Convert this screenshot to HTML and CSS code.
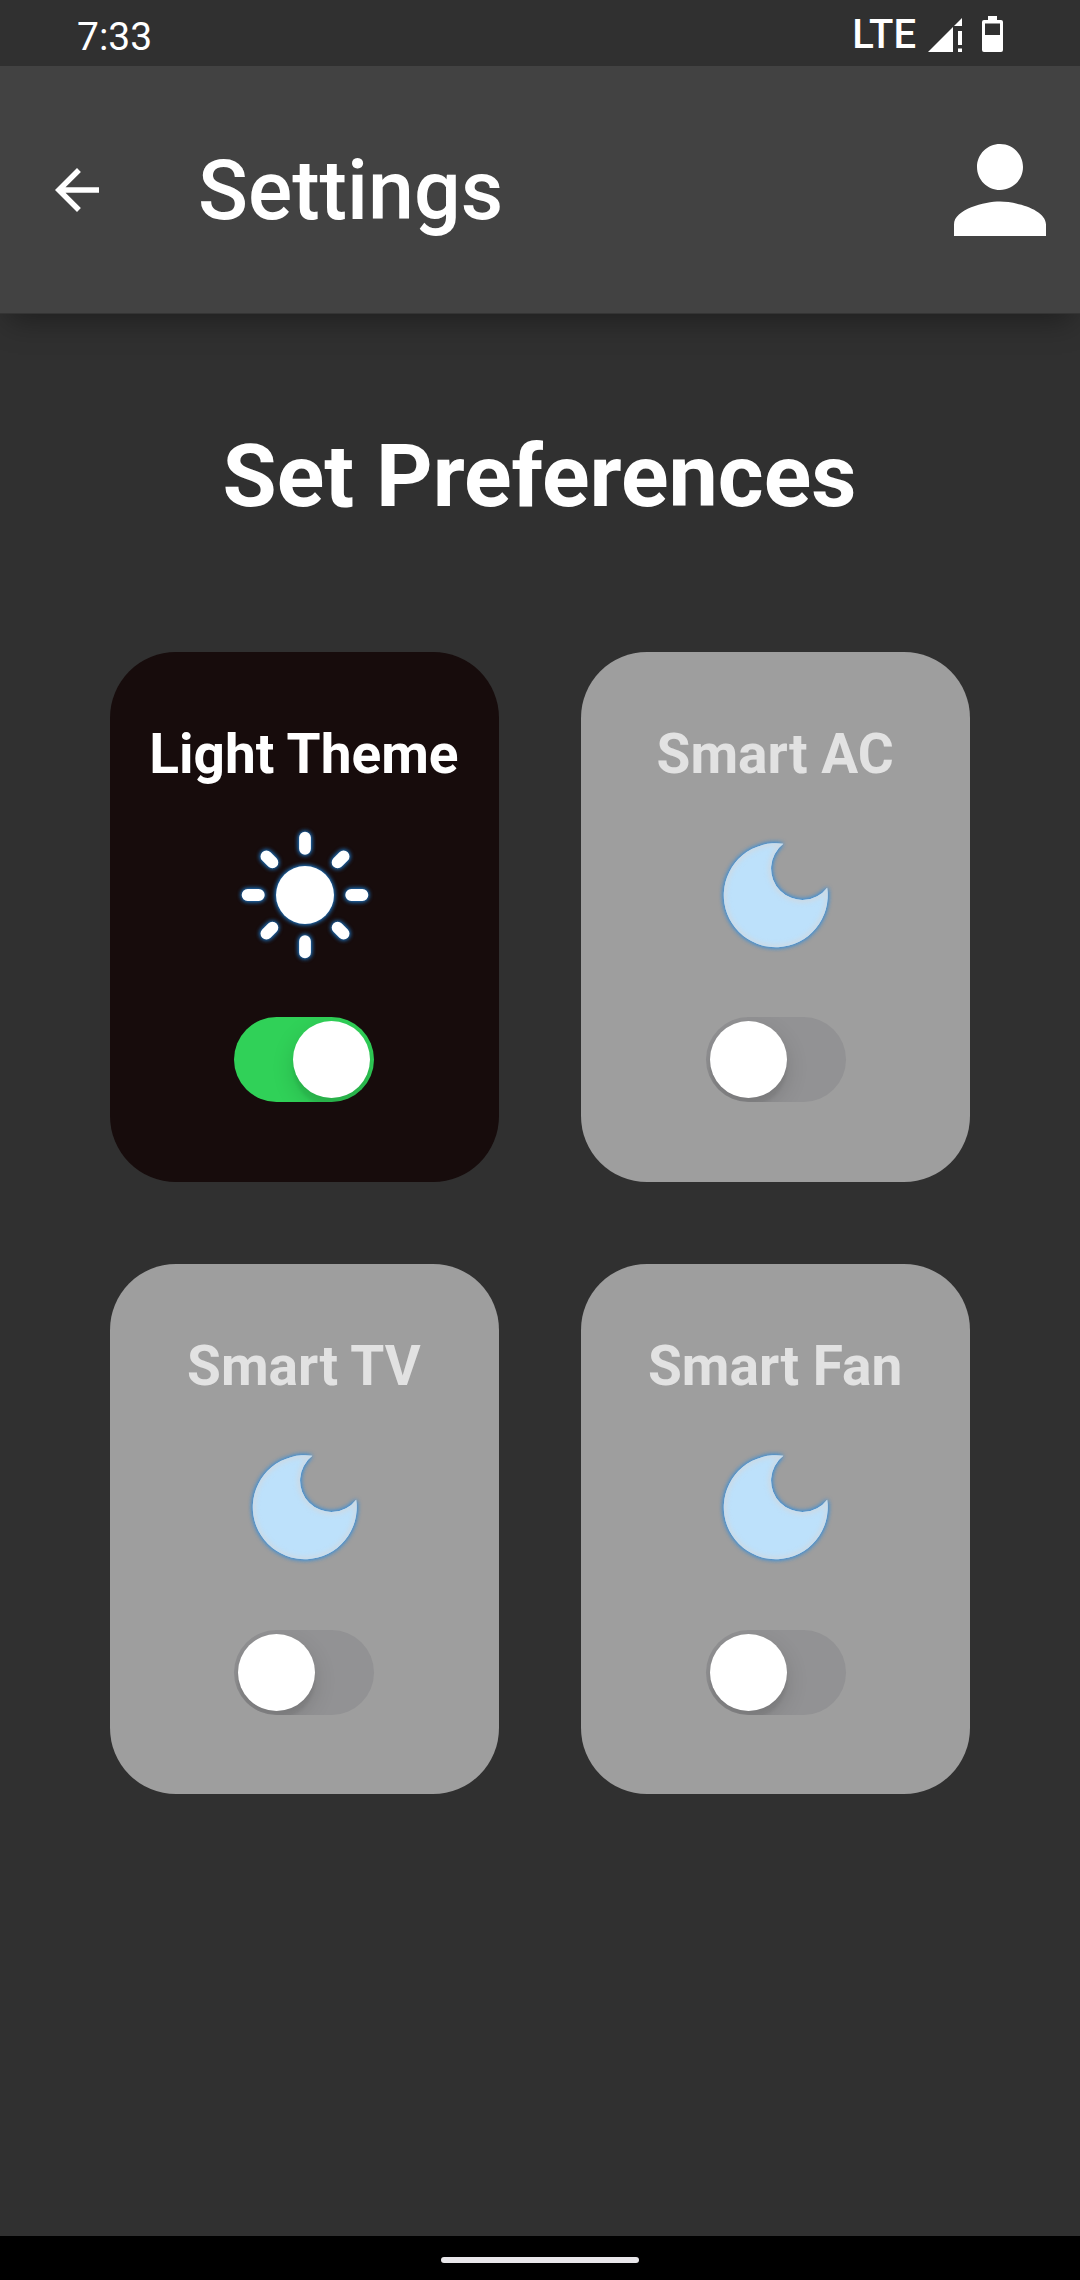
FILE: index.html
```html
<!DOCTYPE html>
<html lang="en">
<head>
<meta charset="utf-8">
<title>Settings</title>
<link rel="stylesheet" href="styles.css">
</head>
<body>
<svg width="0" height="0" class="defs" aria-hidden="true">
  <defs>
    <filter id="glow" x="-20%" y="-20%" width="140%" height="140%" color-interpolation-filters="sRGB">
      <feGaussianBlur in="SourceAlpha" stdDeviation="2.8" result="b"/>
      <feFlood flood-color="#1e88e5" flood-opacity=".8"/>
      <feComposite in2="b" operator="in" result="g"/>
      <feMerge><feMergeNode in="g"/><feMergeNode in="g"/><feMergeNode in="SourceGraphic"/></feMerge>
    </filter>
    <filter id="soft" x="-20%" y="-20%" width="140%" height="140%" color-interpolation-filters="sRGB">
      <feGaussianBlur stdDeviation="2"/>
    </filter>
    <clipPath id="moon-clip"><path d="M7.3 -51.2A52 52 0 1 0 51.2 -7.3A31.3 31.3 0 1 1 7.3 -51.2Z"/></clipPath>
    <symbol id="moon" viewBox="-70 -70 140 140">
      <path filter="url(#glow)" fill="#bde1fb" d="M7.3 -51.2A52 52 0 1 0 51.2 -7.3A31.3 31.3 0 1 1 7.3 -51.2Z"/>
      <g clip-path="url(#moon-clip)">
        <path filter="url(#soft)" fill="none" stroke="#cbdae6" stroke-width="6" d="M7.3 -51.2A52 52 0 1 0 51.2 -7.3A31.3 31.3 0 1 1 7.3 -51.2Z"/>
      </g>
    </symbol>
    <symbol id="sun" viewBox="-70 -70 140 140">
      <g filter="url(#glow)">
        <circle r="29" fill="#fff"/>
        <path stroke="#fff" stroke-width="11.8" stroke-linecap="round" d="M0 -57.4V-46.2M0 57.4V46.2M-57.4 0H-46.2M57.4 0H46.2M-38.6 -38.6L-32.6 -32.6M38.6 -38.6L32.6 -32.6M-38.6 38.6L-32.6 32.6M38.6 38.6L32.6 32.6"/>
      </g>
    </symbol>
  </defs>
</svg>
<div class="screen">
  <div class="statusbar">
    <span class="time">7:33</span>
    <div class="status-icons">
      <span class="network">LTE</span>
      <svg class="signal" viewBox="0 0 34 34"><path fill="#fff" d="M0 34L25 9V34ZM26 8L34 0V8ZM30 13H34V27H30ZM30 30.5H34V34H30Z"/></svg>
      <svg class="battery" viewBox="0 0 21 36"><path fill="#fff" fill-rule="evenodd" d="M6 0H15V4H19Q21 4 21 6V34Q21 36 19 36H2Q0 36 0 34V6Q0 4 2 4H6ZM3 7.5V19H18V7.5Z"/></svg>
    </div>
  </div>
  <header class="appbar">
    <svg class="back" viewBox="0 0 24 24"><path fill="#fff" d="M20 11H7.83l5.59-5.59L12 4l-8 8 8 8 1.41-1.41L7.83 13H20v-2z"/></svg>
    <h1 class="appbar-title">Settings</h1>
    <svg class="person" viewBox="0 0 24 24"><path fill="#fff" d="M12 12c2.21 0 4-1.79 4-4s-1.79-4-4-4-4 1.79-4 4 1.79 4 4 4zm0 2c-2.67 0-8 1.34-8 4v2h16v-2c0-2.66-5.33-4-8-4z"/></svg>
  </header>
  <main class="content">
    <h2 class="heading">Set Preferences</h2>
    <div class="grid">
      <section class="card card-on">
        <h3 class="card-title">Light Theme</h3>
        <svg class="card-icon"><use href="#sun"/></svg>
        <div class="switch switch-on"><div class="knob"></div></div>
      </section>
      <section class="card">
        <h3 class="card-title">Smart AC</h3>
        <svg class="card-icon"><use href="#moon"/></svg>
        <div class="switch"><div class="knob"></div></div>
      </section>
      <section class="card">
        <h3 class="card-title">Smart TV</h3>
        <svg class="card-icon"><use href="#moon"/></svg>
        <div class="switch"><div class="knob"></div></div>
      </section>
      <section class="card">
        <h3 class="card-title">Smart Fan</h3>
        <svg class="card-icon"><use href="#moon"/></svg>
        <div class="switch"><div class="knob"></div></div>
      </section>
    </div>
  </main>
  <footer class="navbar"><div class="handle"></div></footer>
</div>
</body>
</html>
```
FILE: styles.css
```css
* { box-sizing: border-box; margin: 0; padding: 0; }
body { background: #303030; color: #fff; font-family: Roboto, sans-serif; }
.defs { display: block; }
.screen { width: 1080px; height: 2280px; display: flex; flex-direction: column; overflow: hidden; }

.statusbar { height: 66px; flex: none; display: flex; justify-content: space-between; padding: 0 77px; background: #303030; z-index: 2; }
.time { font-size: 39px; line-height: 74px; }
.status-icons { display: flex; }
.network { font-size: 40px; line-height: 70px; font-weight: 500; margin-right: 12px; }
.signal { width: 34px; height: 34px; margin: 18px 20px 0 0; }
.battery { width: 21px; height: 36px; margin-top: 16px; }

.appbar { height: 247px; flex: none; display: flex; align-items: center; padding: 1px 11px 0 44px; background: #424242; box-shadow: 0 1px 0 #343434, 0 16px 28px -8px rgba(0, 0, 0, .36); z-index: 1; }
.back { width: 66px; height: 66px; }
.appbar-title { margin-left: 88px; padding-top: 1px; font-size: 82.5px; font-weight: 500; line-height: 97px; }
.person { width: 138px; height: 138px; margin-left: auto; }

.content { flex: 1; padding: 111px 110px 0; }
.heading { padding-right: 1px; font-size: 88px; font-weight: 700; line-height: 104px; text-align: center; }
.grid { display: grid; grid-template-columns: 1fr 1fr; grid-auto-rows: 530px; gap: 82.4px 82.5px; margin-top: 124px; }
.card { display: flex; flex-direction: column; align-items: center; padding-top: 68px; border-radius: 66px; background: #9e9e9e; }
.card-on { background: #170c0c; }
.card-title { padding-right: 1px; font-size: 55px; font-weight: 700; line-height: 68px; color: #e2e2e2; white-space: nowrap; }
.card-on .card-title { color: #fff; }
.card-icon { width: 140px; height: 140px; margin: 37px 0 0 .75px; }
.switch { display: flex; width: 140px; height: 85.25px; margin-top: 52.2px; padding: 4px; border-radius: 43px; background: #929294; overflow: hidden; }
.switch-on { justify-content: flex-end; background: #30d158; }
.knob { width: 77px; height: 77px; border-radius: 50%; background: #fff; box-shadow: 0 8px 22px rgba(0, 0, 0, .15), 0 8px 3px rgba(0, 0, 0, .06); }

.navbar { height: 44px; flex: none; display: flex; justify-content: center; padding-top: 21px; background: #000; }
.handle { width: 198px; height: 6px; border-radius: 3px; background: #e8e6ea; }
```
